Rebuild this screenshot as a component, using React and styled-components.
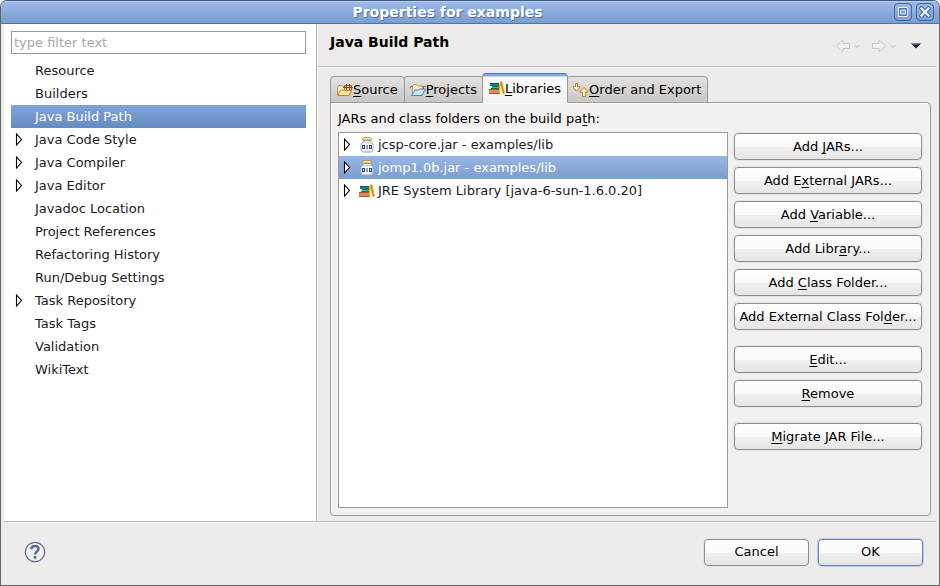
import React, { useState } from "react";
import styled, { createGlobalStyle, css } from "styled-components";

const GlobalStyle = createGlobalStyle`
  * { box-sizing: border-box; }
  body { margin: 0; background: #f4f4f4; }
  body, button, input {
    font-family: "DejaVu Sans", sans-serif;
    font-size: 13px;
    line-height: 17px;
    color: #1a1a1a;
  }
  button { cursor: default; }
  svg { display: block; flex: none; }
`;

const Window = styled.div`
  display: flex;
  flex-direction: column;
  min-height: 100vh;
  background: #edecea;
  border: 1px solid #666563;
  border-top-color: #3f5a82;
  border-radius: 7px 7px 0 0;
  overflow: hidden;
`;

const TitleBar = styled.header`
  display: flex;
  align-items: center;
  height: 23px;
  padding: 0 5px 1px 0;
  background: linear-gradient(#9dbae8, #88a9d9 55%, #7b9fd0);
  border-top: 1px solid #b8cdf0;
  border-bottom: 1px solid #4a73ad;
`;

const WindowTitle = styled.h1`
  flex: 1;
  margin: 0;
  text-align: center;
  font-size: 14px;
  line-height: 20px;
  font-weight: bold;
  color: #fff;
  text-shadow: 1px 1px 1px #4b6fa5;
`;

const WindowButtons = styled.div`
  display: flex;
  gap: 4px;
`;

const WindowButton = styled.button`
  display: grid;
  place-items: center;
  width: 18px;
  height: 18px;
  padding: 0;
  background: linear-gradient(#9ab7e5, #7fa2d3);
  border: 1px solid #43659a;
  border-radius: 4px;
`;

const Body = styled.div`
  flex: 1;
  display: grid;
  grid-template-columns: 313px 1fr;
  margin: 0 3px;
  border-bottom: 1px solid #bab8b5;
`;

const Sidebar = styled.nav`
  padding: 7px 10px 7px 7px;
  background: #fff;
  border-right: 1px solid #bab8b5;
`;

const Filter = styled.input`
  display: block;
  width: 100%;
  height: 23px;
  margin-bottom: 5px;
  padding: 0 2px 1px;
  background: #fff;
  border: 1px solid #9c9a97;
  outline: none;
  &::placeholder { color: #aba7a3; opacity: 1; }
`;

const Tree = styled.ul`
  margin: 0;
  padding: 0;
  list-style: none;
`;

const TreeRow = styled.li`
  display: flex;
  align-items: center;
  height: 23px;
  padding-left: 4px;
  white-space: nowrap;
  ${(p) =>
    p.$selected &&
    css`
      color: #fff;
      background: ${p.$inactive
        ? "linear-gradient(#7fa4d6, #658cc2)"
        : "linear-gradient(#99b6e3, #7a9ed0)"};
    `}
`;

const Expander = styled.button`
  display: grid;
  align-items: center;
  width: ${(p) => p.$width}px;
  height: 15px;
  padding: 0;
  background: none;
  border: 0;
`;

const Indent = styled.span`
  width: 20px;
`;

const Content = styled.main`
  display: flex;
  flex-direction: column;
  min-width: 0;
  border-left: 1px solid #fafaf9;
`;

const PageHeader = styled.div`
  display: flex;
  justify-content: space-between;
  align-items: center;
  height: 43px;
  padding: 0 15px 6px 12px;
  border-bottom: 1px solid #bab8b5;
`;

const PageTitle = styled.h2`
  margin: 0;
  font-size: 14px;
  line-height: 17px;
  color: #000;
`;

const NavButtons = styled.div`
  display: flex;
  align-items: center;
  padding-top: 8px;
`;

const NavButton = styled.button`
  display: flex;
  align-items: center;
  gap: 4px;
  margin-left: ${(p) => p.$gap}px;
  padding: 0;
  background: none;
  border: 0;
`;

const TabArea = styled.div`
  flex: 1;
  display: flex;
  flex-direction: column;
  padding: 5px 5px 5px 12px;
  border-top: 1px solid #fafaf9;
`;

const TabList = styled.div`
  display: flex;
  align-items: flex-end;
  margin-bottom: -1px;
`;

const Tab = styled.button`
  display: flex;
  align-items: center;
  z-index: ${(p) => p.$level};
  height: 27px;
  padding: 0 6px;
  white-space: nowrap;
  color: #000;
  background: linear-gradient(#e3e2e0, #c9c8c6);
  border: 1px solid #9c9a97;
  border-radius: 4px 4px 0 0;
  & + & { margin-left: -2px; }
  ${(p) =>
    p.$active &&
    css`
      height: 30px;
      background: linear-gradient(#86a9db 2px, #fbfbfa 3px, #f2f1ef);
      border-top-color: #5479ad;
      border-bottom-color: #f2f1ef;
    `}
`;

const TabPanel = styled.section`
  flex: 1;
  display: grid;
  grid-template-columns: 1fr 188px;
  grid-template-rows: auto 1fr;
  column-gap: 6px;
  row-gap: 5px;
  padding: 7px 8px 7px 7px;
  color: #000;
  background: #f2f1ef;
  border: 1px solid #9c9a97;
  border-radius: 0 4px 4px 4px;
  box-shadow: inset 1px 1px #fff;
`;

const ListLabel = styled.div`
  grid-column: 1 / -1;
`;

const LibraryList = styled(Tree)`
  color: #1a1a1a;
  background: #fff;
  border: 1px solid #9c9a97;
`;

const ItemText = styled.span`
  padding-left: 3px;
`;

const Actions = styled.div`
  display: flex;
  flex-direction: column;
  gap: 16px;
  padding-top: 1px;
`;

const ActionGroup = styled.div`
  display: grid;
  gap: 7px;
`;

const Button = styled.button`
  height: 27px;
  padding: 0 2px 1px;
  white-space: nowrap;
  color: #000;
  background: linear-gradient(#fff, #fafafa 50%, #f1f1f0 51%, #e6e5e4);
  border: 1px solid ${(p) => (p.$primary ? "#6587b8" : "#8f8e8c")};
  border-radius: 4px;
  box-shadow: 0 0 0 1px ${(p) => (p.$primary ? "#b9cdec" : "#e6e5e3")};
`;

const Footer = styled.footer`
  display: flex;
  justify-content: space-between;
  align-items: center;
  height: 63px;
  margin: 0 3px;
  padding: 0 13px 4px 20px;
  border-top: 1px solid #fafaf9;
`;

const HelpButton = styled.button`
  padding: 0;
  background: none;
  border: 0;
`;

const DialogButtons = styled.div`
  display: grid;
  grid-template-columns: 105px 105px;
  gap: 9px;
`;

const Key = styled.span`
  text-decoration: underline;
  text-decoration-thickness: 1px;
  text-underline-offset: 2px;
  text-decoration-skip-ink: none;
`;

/* Renders a label whose mnemonic letter follows an ampersand. */
function Mnemonic({ text }) {
  const at = text.indexOf("&");
  if (at < 0) return <span>{text}</span>;
  return (
    <span>
      {text.slice(0, at)}
      <Key>{text[at + 1]}</Key>
      {text.slice(at + 2)}
    </span>
  );
}

const Triangle = () => (
  <svg width="8" height="13" viewBox="0 0 8 13">
    <path d="M1.5 1v11L6.5 6.5z" fill="#fff" stroke="#000" strokeWidth="1.1" />
  </svg>
);

const JarIcon = () => (
  <svg width="16" height="16" viewBox="0 0 16 16">
    <path d="M4 3.5h8v1.500l2 2v6l-1.500 2h-9L2 13V7l2-2z" fill="#e8eff8" stroke="#91a3bd" />
    <path d="M3.500 5.500h9" stroke="#c5d3e6" />
    <rect x="3.500" y=".7" width="9" height="2.300" rx="1" fill="#fff6cf" stroke="#bf9130" />
    <path d="M2.500 7.500h11v5h-11z" fill="#fff" />
    <rect x="3.500" y="8.500" width="2" height="3" fill="none" stroke="#273f68" />
    <path d="M8 8v4" stroke="#273f68" />
    <rect x="10.500" y="8.500" width="2" height="3" fill="none" stroke="#273f68" />
  </svg>
);

const BooksIcon = () => (
  <svg width="16" height="16" viewBox="0 0 16 16">
    <path d="M1 3h9v3H1z" fill="#127d8c" />
    <path d="M1 3.500h9" stroke="#11506f" />
    <path d="M3 6h8v3H3z" fill="#5cb27c" />
    <path d="M3 6.500h8M2 8.500h9" stroke="#1d7050" />
    <path d="M0 9h11v5H0z" fill="#e0895b" />
    <path d="M0 9.500h11M0 13.500h11" stroke="#b0522c" />
    <path d="M10 5l1-3 2-1 1 3 1.800 9.500-2.300.5-1.700-8-1.300 8H10z" fill="#f4b12b" />
    <path d="M12 2l2.700 11.500" stroke="#c97a12" />
  </svg>
);

const SourceIcon = () => (
  <svg width="16" height="16" viewBox="0 0 16 16">
    <path d="M.5 13V5.500l1.500-2h3l1 1.500h5v8z" fill="#fff1c4" stroke="#c48f3c" />
    <path d="M7.500 3.500h7v5h-7z" fill="#ecd0ad" stroke="#95592c" />
    <path d="M9.500 2v7M12.500 2v7M6 5.500h9.500" stroke="#7d431e" />
    <path d="M1 13.500l2.500-5.500h4l1 .5h6L12 13.500z" fill="#ffe2a0" stroke="#c1842c" />
  </svg>
);

const ProjectIcon = () => (
  <svg width="16" height="16" viewBox="0 0 16 16">
    <path d="M2.500 12V4l1-1.500h3L7.500 4h5V8z" fill="#fff0bd" stroke="#bd9b58" />
    <path d="M0 4.500h3M12 4.500h4M.5 4.500v2M13.500 5v2" stroke="#77758e" />
    <path d="M1.500 13.500L5 8h3.500l1-1h6L12 13.500z" fill="#cfe2fc" stroke="#4d7dcb" />
    <path d="M2.500 7v5" stroke="#7c91bd" />
  </svg>
);

const OrderIcon = () => (
  <svg width="16" height="16" viewBox="0 0 16 16">
    <path d="M2.500 1.500h2v3h2.300v1.300L3.500 9 .5 5.800V4.500h2z" fill="#fff3c4" stroke="#b8842a" />
    <path d="M9.500 14.500h3v-4h2V9L11 5.500 7.500 9v1.500h2z" fill="#fff3c4" stroke="#b8842a" />
  </svg>
);

const ArrowIcon = ({ forward }) => (
  <svg width="14" height="12" viewBox="0 0 14 12">
    <path
      d={forward ? "M.5 3.500H7V.5h1L13.500 6 8 11.500H7v-3H.5z" : "M13.500 3.500H7V.5H6L.5 6 6 11.500h1v-3h6.500z"}
      fill="#f2f1ef"
      stroke="#c8c6c3"
    />
  </svg>
);

const Chevron = () => (
  <svg width="6" height="5" viewBox="0 0 6 5">
    <path d="M.5 1l2.500 2.500L5.500 1" fill="none" stroke="#bab8b5" />
  </svg>
);

const MenuArrow = () => (
  <svg width="10" height="6" viewBox="0 0 10 6">
    <path d="M0 .5h10L5 5.500z" fill="#1d1b33" />
    <path d="M2 1.500h5" stroke="#544d80" />
  </svg>
);

const HelpIcon = () => (
  <svg width="22" height="22" viewBox="0 0 22 22">
    <circle cx="11" cy="11" r="9.700" fill="#f0f0f1" stroke="#566b90" strokeWidth="1.200" />
    <path d="M7.300 8.200C7.500 3.800 14.800 4 14.500 8c-.2 2.400-3.400 2.700-3.400 5.400" fill="none" stroke="#566b90" strokeWidth="2.500" />
    <rect x="9.700" y="15" width="2.800" height="2.700" rx=".8" fill="#566b90" />
  </svg>
);

const MaximizeIcon = () => (
  <svg width="10" height="10" viewBox="0 0 10 10">
    <path d="M.5 .5h9v9h-9z" fill="#5178b1" stroke="#e9f0fb" />
    <path d="M2.500 3h5v4h-5z" fill="#85a7d9" stroke="#d9e5f7" />
  </svg>
);

const CloseIcon = () => (
  <svg width="12" height="12" viewBox="0 0 12 12">
    <path d="M2.500 2.500l7 7M9.500 2.500l-7 7" stroke="#456ba3" strokeWidth="4.500" strokeLinecap="round" />
    <path d="M2.500 2.500l7 7M9.500 2.500l-7 7" stroke="#edf3fc" strokeWidth="2.300" strokeLinecap="square" />
  </svg>
);

const pages = [
  ["Resource"],
  ["Builders"],
  ["Java Build Path"],
  ["Java Code Style", true],
  ["Java Compiler", true],
  ["Java Editor", true],
  ["Javadoc Location"],
  ["Project References"],
  ["Refactoring History"],
  ["Run/Debug Settings"],
  ["Task Repository", true],
  ["Task Tags"],
  ["Validation"],
  ["WikiText"],
];

const tabs = [
  { label: "&Source", Icon: SourceIcon, level: 2 },
  { label: "&Projects", Icon: ProjectIcon, level: 1 },
  { label: "&Libraries", Icon: BooksIcon, level: 3 },
  { label: "&Order and Export", Icon: OrderIcon, level: 1 },
];

const libraries = [
  { label: "jcsp-core.jar - examples/lib", Icon: JarIcon },
  { label: "jomp1.0b.jar - examples/lib", Icon: JarIcon },
  { label: "JRE System Library [java-6-sun-1.6.0.20]", Icon: BooksIcon },
];

const actionGroups = [
  ["Add &JARs...", "Add E&xternal JARs...", "Add &Variable...", "Add Libr&ary...", "Add &Class Folder...", "Add External Class Fol&der..."],
  ["&Edit...", "&Remove"],
  ["&Migrate JAR File..."],
];

export default function App() {
  const [page, setPage] = useState("Java Build Path");
  const [library, setLibrary] = useState(1);

  return (
    <>
      <GlobalStyle />
      <Window>
        <TitleBar>
          <WindowTitle>Properties for examples</WindowTitle>
          <WindowButtons>
            <WindowButton aria-label="Maximize"><MaximizeIcon /></WindowButton>
            <WindowButton aria-label="Close"><CloseIcon /></WindowButton>
          </WindowButtons>
        </TitleBar>
        <Body>
          <Sidebar>
            <Filter type="text" placeholder="type filter text" aria-label="Filter" />
            <Tree role="tree" aria-label="Property pages">
              {pages.map(([name, expandable]) => (
                <TreeRow
                  key={name}
                  role="treeitem"
                  aria-selected={page === name}
                  $selected={page === name}
                  $inactive
                  onClick={() => setPage(name)}
                >
                  {expandable ? (
                    <Expander $width={20} aria-label={`Expand ${name}`}><Triangle /></Expander>
                  ) : (
                    <Indent />
                  )}
                  {name}
                </TreeRow>
              ))}
            </Tree>
          </Sidebar>
          <Content>
            <PageHeader>
              <PageTitle>Java Build Path</PageTitle>
              <NavButtons>
                <NavButton $gap={0} disabled aria-label="Back"><ArrowIcon /><Chevron /></NavButton>
                <NavButton $gap={12} disabled aria-label="Forward"><ArrowIcon forward /><Chevron /></NavButton>
                <NavButton $gap={15} aria-label="Menu"><MenuArrow /></NavButton>
              </NavButtons>
            </PageHeader>
            <TabArea>
              <TabList role="tablist">
                {tabs.map(({ label, Icon, level }) => (
                  <Tab key={label} role="tab" aria-selected={level === 3} $active={level === 3} $level={level}>
                    <Icon />
                    <Mnemonic text={label} />
                  </Tab>
                ))}
              </TabList>
              <TabPanel role="tabpanel">
                <ListLabel id="library-label">
                  <Mnemonic text="JARs and class folders on the build pa&th:" />
                </ListLabel>
                <LibraryList role="tree" aria-labelledby="library-label">
                  {libraries.map(({ label, Icon }, i) => (
                    <TreeRow
                      key={label}
                      role="treeitem"
                      aria-selected={library === i}
                      $selected={library === i}
                      onClick={() => setLibrary(i)}
                    >
                      <Expander $width={16} aria-label={`Expand ${label}`}><Triangle /></Expander>
                      <Icon />
                      <ItemText>{label}</ItemText>
                    </TreeRow>
                  ))}
                </LibraryList>
                <Actions>
                  {actionGroups.map((group) => (
                    <ActionGroup key={group[0]}>
                      {group.map((label) => (
                        <Button key={label}><Mnemonic text={label} /></Button>
                      ))}
                    </ActionGroup>
                  ))}
                </Actions>
              </TabPanel>
            </TabArea>
          </Content>
        </Body>
        <Footer>
          <HelpButton aria-label="Help"><HelpIcon /></HelpButton>
          <DialogButtons>
            <Button>Cancel</Button>
            <Button $primary>OK</Button>
          </DialogButtons>
        </Footer>
      </Window>
    </>
  );
}
